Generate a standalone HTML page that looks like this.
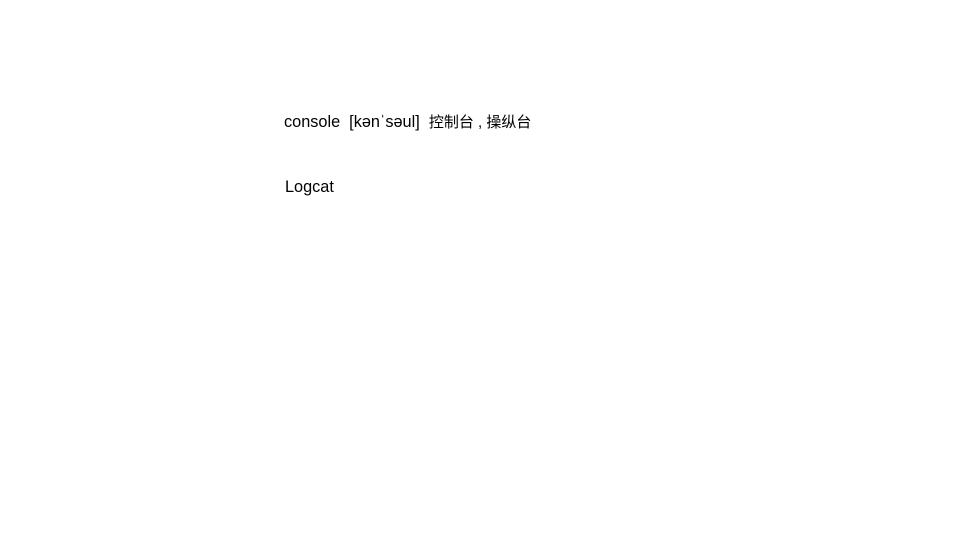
<!DOCTYPE html>
<html><head><meta charset="utf-8"><style>
html,body{margin:0;width:960px;height:540px;background:#fff;overflow:hidden}
div{position:absolute;font-family:"Liberation Sans","Noto Sans CJK SC",sans-serif;font-size:16.3px;color:#000;white-space:pre;line-height:18px}
span{font-size:15px}
</style></head><body>
<div style="left:284px;top:113px">console  [kənˈsəul]  <span>控制台 , 操纵台</span></div>
<div style="left:285px;top:178px">Logcat</div>
</body></html>
